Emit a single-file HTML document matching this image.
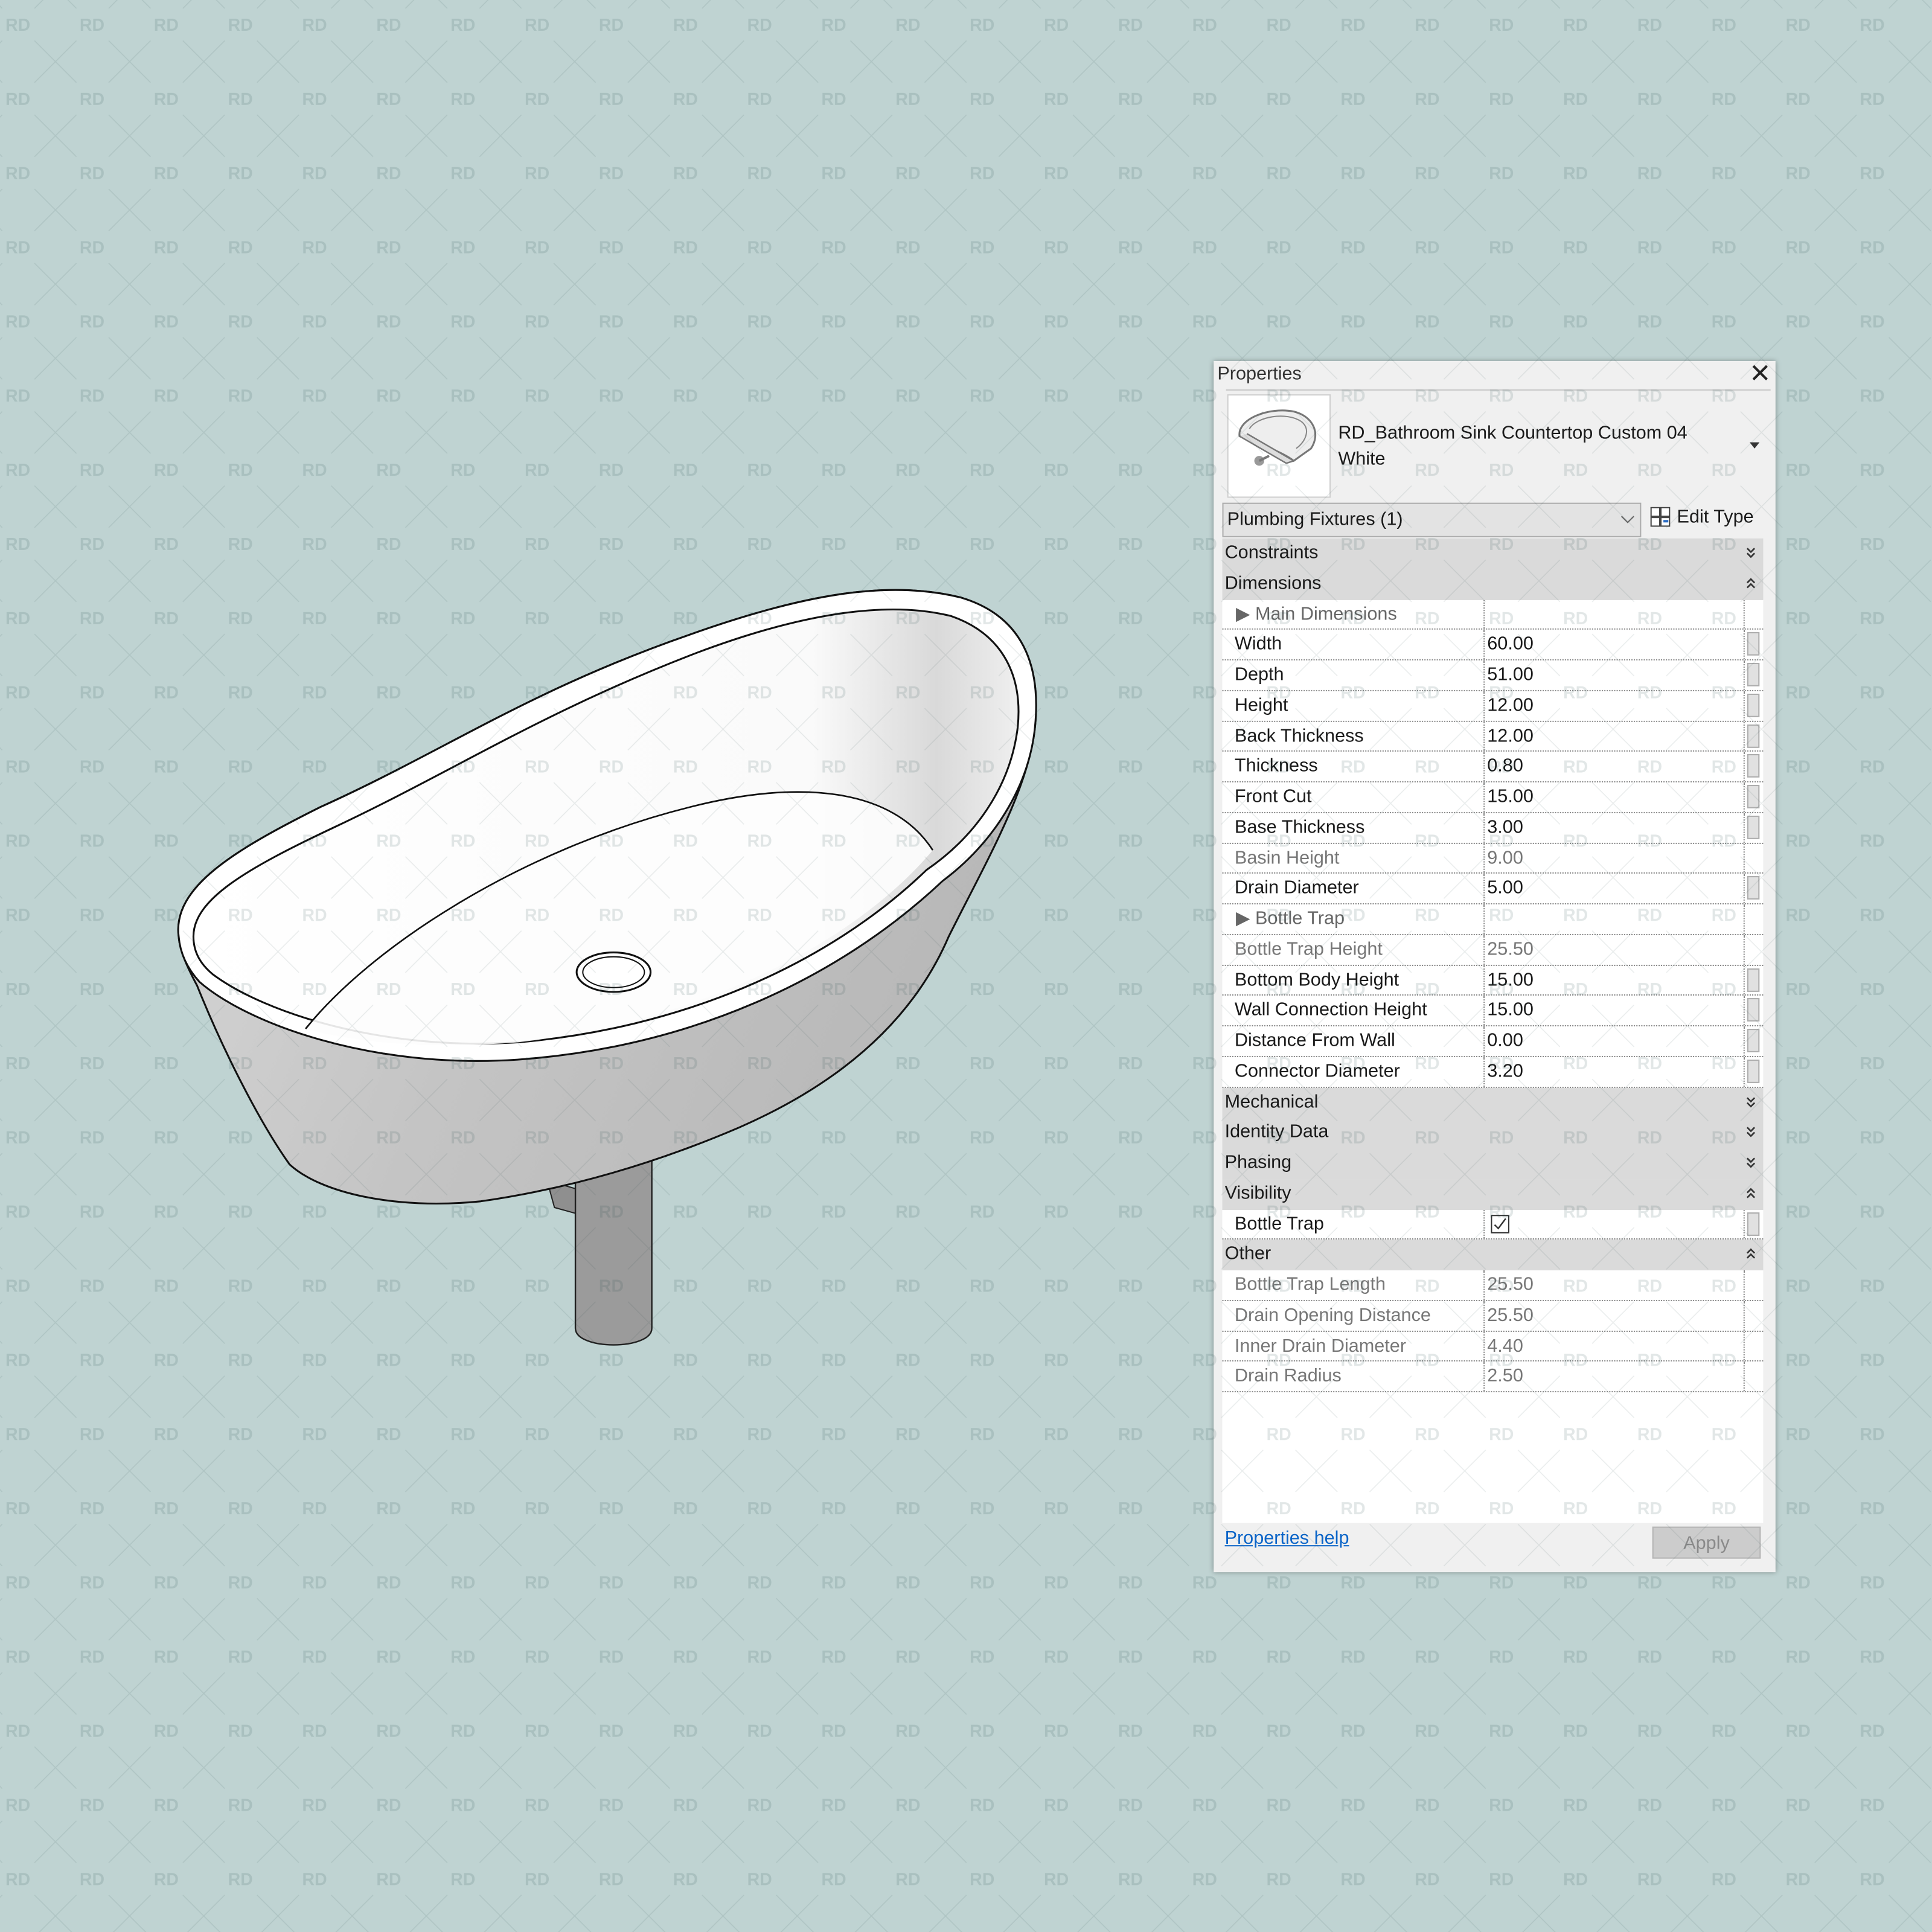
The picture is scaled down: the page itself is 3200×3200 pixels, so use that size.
<!DOCTYPE html>
<html><head><meta charset="utf-8">
<style>
html,body{margin:0;padding:0;width:3200px;height:3200px;overflow:hidden;background:#bfd3d2;}
#w{position:absolute;left:0;top:0;width:1568px;height:1568px;transform:scale(2.0408163);transform-origin:0 0;font-family:"Liberation Sans",sans-serif;}
.abs{position:absolute}
#panel{left:985px;top:293px;width:456px;height:983px;background:#f0f0f0;box-shadow:0 0 4px rgba(0,0,0,.35);}
.t{font-size:15px;color:#1a1a1a;white-space:nowrap;letter-spacing:0}
#grid{left:992px;top:437px;width:439px;}
.r{height:24.75px;display:flex;box-sizing:border-box;font-size:15px;letter-spacing:0;white-space:nowrap}
.h{background:#dadada;color:#1a1a1a;padding-left:2px;line-height:24px;position:relative}
.h svg{position:absolute;right:6px;top:7px}
.p{background:#fff;border-bottom:1px dotted #888}
.p .l{width:213px;padding-left:10px;box-sizing:border-box;line-height:24px;border-right:1px dotted #888;color:#1a1a1a}
.p .v{width:211px;padding-left:2px;box-sizing:border-box;line-height:24px;border-right:1px dotted #888;color:#1a1a1a}
.p .s{width:15px;position:relative}
.p .s b{position:absolute;left:2px;top:2px;width:10px;height:19px;background:#e1e1e1;border:1px solid #adadad;box-sizing:border-box}
.g .l,.g .v{color:#777}
.sub .l{color:#666;padding-left:11px}
</style></head><body>
<div id="w">
<svg class="abs" style="left:0;top:0" width="1568" height="1568" viewBox="0 0 1568 1568">
<defs>
<linearGradient id="side" x1="0" y1="0" x2="1" y2="0.3">
<stop offset="0" stop-color="#d8d8d8"/><stop offset="0.5" stop-color="#c4c4c4"/><stop offset="1" stop-color="#b8b8b8"/></linearGradient>
<linearGradient id="inner" x1="0" y1="0" x2="1" y2="0">
<stop offset="0" stop-color="#ffffff"/><stop offset="0.75" stop-color="#fafafa"/><stop offset="0.9" stop-color="#d9d9d9"/><stop offset="1" stop-color="#efefef"/></linearGradient>
<symbol id="dn" viewBox="0 0 8 10"><path d="M1,1 L4,4 L7,1 M1,5 L4,8 L7,5" fill="none" stroke="#333" stroke-width="1.3"/></symbol>
<symbol id="up" viewBox="0 0 8 10"><path d="M1,4 L4,1 L7,4 M1,8 L4,5 L7,8" fill="none" stroke="#333" stroke-width="1.3"/></symbol>
</defs>
<path d="M444,958 L468,965 L468,985 L450,980 Z" fill="#8f8f8f" stroke="#222" stroke-width="1"/>
<path d="M467,925 L529,925 L529,1078 C529,1096 467,1096 467,1078 Z" fill="#9b9b9b" stroke="#222" stroke-width="1.2"/>
<path d="M145,760 C140,720 190,690 260,655 C360,610 430,560 560,515 C650,483 720,470 780,485 C830,500 845,540 840,590 C835,640 800,700 770,760 C740,830 680,880 600,915 C530,945 460,965 390,975 C320,982 260,968 235,945 C210,910 180,850 160,800 C152,785 146,772 145,760 Z" fill="url(#side)" stroke="#111" stroke-width="1.5"/>
<path d="M145,760 C140,720 190,690 260,655 C360,610 430,560 560,515 C650,483 720,470 780,485 C830,500 845,540 840,590 C835,640 805,685 765,715 C680,795 560,850 420,860 C300,868 200,830 162,797 C151,785 146,772 145,760 Z" fill="#fff" stroke="#111" stroke-width="1.5"/>
<path d="M157,760 C157,730 200,705 270,672 C370,625 440,578 565,530 C650,498 720,487 772,500 C815,515 830,550 826,590 C820,640 790,680 752,706 C670,785 550,835 420,846 C310,853 215,822 173,791 C162,782 157,772 157,760 Z" fill="url(#inner)" stroke="#111" stroke-width="1.5"/>
<path d="M248,835 C300,770 420,690 560,655 C650,632 725,640 757,690 C690,770 560,830 420,846 C340,852 285,845 248,835 Z" fill="#fdfdfd" opacity="0.9"/>
<path d="M248,835 C300,770 420,690 560,655 C650,632 725,640 757,690" fill="none" stroke="#111" stroke-width="1.3"/>
<ellipse cx="498" cy="789" rx="30" ry="16" fill="#fff" stroke="#111" stroke-width="1.5"/>
<ellipse cx="498" cy="789" rx="25" ry="12.5" fill="#fff" stroke="#111" stroke-width="1"/>
</svg>

<div id="panel" class="abs"></div>
<div class="abs t" style="left:988px;top:295px;color:#333">Properties</div>
<svg class="abs" style="left:1421px;top:295px" width="15" height="15" viewBox="0 0 15 15"><path d="M2,2 L13,13 M13,2 L2,13" stroke="#222" stroke-width="2"/></svg>
<div class="abs" style="left:995px;top:316px;width:442px;height:1px;background:#c8c8c8"></div>
<div class="abs" style="left:996px;top:320px;width:84px;height:84px;background:#fff;border:1px solid #cfcfcf;box-sizing:border-box"></div>
<svg class="abs" style="left:1000px;top:326px" width="76" height="58" viewBox="0 0 76 58">
<path d="M6,28 C4,14 30,4 50,8 C66,12 72,26 64,38 L50,48 C40,40 20,34 6,28 Z" fill="#eee" stroke="#777" stroke-width="1.5"/>
<path d="M6,28 L44,50 L50,48 L12,26" fill="#ddd" stroke="#777" stroke-width="1.2"/>
<path d="M14,22 C20,12 44,8 56,16 C64,22 60,32 52,38" fill="none" stroke="#888" stroke-width="1"/>
<circle cx="22" cy="48" r="4" fill="#999"/>
<path d="M22,48 L30,44" stroke="#777" stroke-width="2"/>
</svg>
<div class="abs t" style="left:1086px;top:343px">RD_Bathroom Sink Countertop Custom 04</div>
<div class="abs t" style="left:1086px;top:364px">White</div>
<div class="abs" style="left:1420px;top:359px;width:0;height:0;border-left:4.5px solid transparent;border-right:4.5px solid transparent;border-top:5px solid #333"></div>
<div class="abs" style="left:992px;top:408px;width:340px;height:28px;background:#e3e3e3;border:1px solid #adadad;box-sizing:border-box"></div>
<div class="abs t" style="left:996px;top:413px">Plumbing Fixtures (1)</div>
<svg class="abs" style="left:1315px;top:417px" width="12" height="10" viewBox="0 0 12 10"><path d="M1,2 L6,7 L11,2" fill="none" stroke="#666" stroke-width="1"/></svg>
<svg class="abs" style="left:1339px;top:411px" width="18" height="18" viewBox="0 0 18 18"><rect x="1" y="1" width="7" height="7" fill="#fff" stroke="#444"/><rect x="1" y="9" width="7" height="7" fill="#fff" stroke="#444"/><rect x="9" y="1" width="7" height="7" fill="#fff" stroke="#444"/><rect x="9" y="9" width="7" height="7" fill="#fff" stroke="#444"/><rect x="11" y="11" width="4" height="2" fill="#2a6cc4"/></svg>
<div class="abs t" style="left:1361px;top:411px">Edit Type</div>

<div id="grid" class="abs">
<div class="r h">Constraints<svg width="8" height="10"><use href="#dn"/></svg></div>
<div class="r h">Dimensions<svg width="8" height="10"><use href="#up"/></svg></div>
<div class="r p sub"><div class="l">&#9654; Main Dimensions</div><div class="v"></div><div class="s"></div></div>
<div class="r p"><div class="l">Width</div><div class="v">60.00</div><div class="s"><b></b></div></div>
<div class="r p"><div class="l">Depth</div><div class="v">51.00</div><div class="s"><b></b></div></div>
<div class="r p"><div class="l">Height</div><div class="v">12.00</div><div class="s"><b></b></div></div>
<div class="r p"><div class="l">Back Thickness</div><div class="v">12.00</div><div class="s"><b></b></div></div>
<div class="r p"><div class="l">Thickness</div><div class="v">0.80</div><div class="s"><b></b></div></div>
<div class="r p"><div class="l">Front Cut</div><div class="v">15.00</div><div class="s"><b></b></div></div>
<div class="r p"><div class="l">Base Thickness</div><div class="v">3.00</div><div class="s"><b></b></div></div>
<div class="r p g"><div class="l">Basin Height</div><div class="v">9.00</div><div class="s"></div></div>
<div class="r p"><div class="l">Drain Diameter</div><div class="v">5.00</div><div class="s"><b></b></div></div>
<div class="r p sub"><div class="l">&#9654; Bottle Trap</div><div class="v"></div><div class="s"></div></div>
<div class="r p g"><div class="l">Bottle Trap Height</div><div class="v">25.50</div><div class="s"></div></div>
<div class="r p"><div class="l">Bottom Body Height</div><div class="v">15.00</div><div class="s"><b></b></div></div>
<div class="r p"><div class="l">Wall Connection Height</div><div class="v">15.00</div><div class="s"><b></b></div></div>
<div class="r p"><div class="l">Distance From Wall</div><div class="v">0.00</div><div class="s"><b></b></div></div>
<div class="r p"><div class="l">Connector Diameter</div><div class="v">3.20</div><div class="s"><b></b></div></div>
<div class="r h">Mechanical<svg width="8" height="10"><use href="#dn"/></svg></div>
<div class="r h">Identity Data<svg width="8" height="10"><use href="#dn"/></svg></div>
<div class="r h">Phasing<svg width="8" height="10"><use href="#dn"/></svg></div>
<div class="r h">Visibility<svg width="8" height="10"><use href="#up"/></svg></div>
<div class="r p"><div class="l">Bottle Trap</div><div class="v"><span style="display:inline-block;width:15px;height:15px;border:1px solid #333;box-sizing:border-box;margin:4px 0 0 3px;position:relative;vertical-align:top"><svg style="position:absolute;left:1px;top:1px" width="11" height="11" viewBox="0 0 11 11"><path d="M1,6 L4,9 L10,1" fill="none" stroke="#333" stroke-width="1.2"/></svg></span></div><div class="s"><b></b></div></div>
<div class="r h">Other<svg width="8" height="10"><use href="#up"/></svg></div>
<div class="r p g"><div class="l">Bottle Trap Length</div><div class="v">25.50</div><div class="s"></div></div>
<div class="r p g"><div class="l">Drain Opening Distance</div><div class="v">25.50</div><div class="s"></div></div>
<div class="r p g"><div class="l">Inner Drain Diameter</div><div class="v">4.40</div><div class="s"></div></div>
<div class="r p g"><div class="l">Drain Radius</div><div class="v">2.50</div><div class="s"></div></div>
<div style="height:106px;background:#fff"></div>
</div>
<div class="abs" style="left:994px;top:1240px;font-size:15px;color:#0a64c8;text-decoration:underline">Properties help</div>
<div class="abs" style="left:1341px;top:1239px;width:88px;height:26px;background:#cccccc;border:1px solid #b5b5b5;box-sizing:border-box;font-size:15px;color:#8a8a8a;text-align:center;line-height:25px">Apply</div>

<svg class="abs" style="left:0;top:0;pointer-events:none" width="1568" height="1568" viewBox="0 0 1568 1568">
<defs>
<pattern id="wm" x="0" y="0" width="60.2" height="60.2" patternUnits="userSpaceOnUse">
<text x="14.5" y="25" font-family="Liberation Sans, sans-serif" font-weight="bold" font-size="14" text-anchor="middle" fill="rgba(20,60,60,0.12)">RD</text>
<path d="M28,33 L62,67 M62,33 L28,67" stroke="rgba(20,60,60,0.09)" stroke-width="0.8"/>
<path d="M-32.2,33 L1.8,67 M1.8,33 L-32.2,67" stroke="rgba(20,60,60,0.09)" stroke-width="0.8"/>
<path d="M28,-27.2 L62,6.8 M62,-27.2 L28,6.8" stroke="rgba(20,60,60,0.09)" stroke-width="0.8"/>
<path d="M-32.2,-27.2 L1.8,6.8 M1.8,-27.2 L-32.2,6.8" stroke="rgba(20,60,60,0.09)" stroke-width="0.8"/>
</pattern>
</defs>
<rect width="1568" height="1568" fill="url(#wm)"/>
</svg>
</div>
</body></html>
